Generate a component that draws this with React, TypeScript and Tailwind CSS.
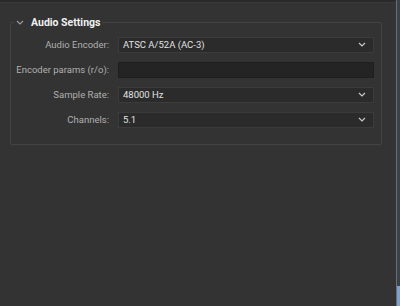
import React from 'react';

type Row = {
  label: string;
  value?: string;
  kind: 'select' | 'readonly';
};

const rows: Row[] = [
  { label: 'Audio Encoder:', value: 'ATSC A/52A (AC-3)', kind: 'select' },
  { label: 'Encoder params (r/o):', kind: 'readonly' },
  { label: 'Sample Rate:', value: '48000 Hz', kind: 'select' },
  { label: 'Channels:', value: '5.1', kind: 'select' },
];

const Chevron = ({ className }: { className?: string }) => (
  <svg width="8" height="5" viewBox="0 0 8 5" className={className} fill="none">
    <path d="M1 1l3 3 3-3" stroke="currentColor" strokeWidth="1.2" />
  </svg>
);

const SettingRow: React.FC<{ row: Row }> = ({ row }) => (
  <div className="flex items-center h-4">
    <span className="w-[100px] pr-[2px] text-right text-[#b0b0b0] whitespace-nowrap">{row.label}</span>
    {row.kind === 'select' ? (
      <div className="ml-[7px] w-[256px] h-4 flex items-center justify-between pl-[4px] pr-[7px] bg-[#2b2b2b] border border-[#3b3b3b] text-[#e2e2e2]">
        <span>{row.value}</span>
        <Chevron className="text-[#c8c8c8]" />
      </div>
    ) : (
      <div className="ml-[7px] w-[256px] h-4 bg-[#242424] border border-[#1f1f1f]" />
    )}
  </div>
);

export default function App() {
  return (
    <div
      className="w-[400px] h-[306px] bg-[#333333] flex overflow-hidden text-[9.5px]"
      style={{ fontFamily: 'Roboto, "Liberation Sans", sans-serif' }}
    >
      <div className="flex-1 flex flex-col">
        <div className="h-[3px] bg-[#2a2a2a] border-b border-[#3a3a3a]" />
        <fieldset className="ml-[10px] mt-[12px] w-[372px] border border-[#444444] rounded-[2px] px-0 pb-[16px]">
          <legend className="ml-[3px] px-[2px] flex items-center gap-[7px] text-[10.5px] font-bold text-[#f0f0f0]">
            <Chevron className="text-[#9a9a9a]" />
            <span>Audio Settings</span>
          </legend>
          <div className="pt-[6px] flex flex-col gap-[9px]">
            {rows.map((r) => (
              <SettingRow key={r.label} row={r} />
            ))}
          </div>
        </fieldset>
      </div>
      <div className="w-[1px] bg-[#6e6e6e]" />
      <div className="w-[3px] flex flex-col bg-[#3a414e]">
        <div className="flex-1" />
        <div className="h-[20px] bg-[#7f9fd0]" />
      </div>
    </div>
  );
}
